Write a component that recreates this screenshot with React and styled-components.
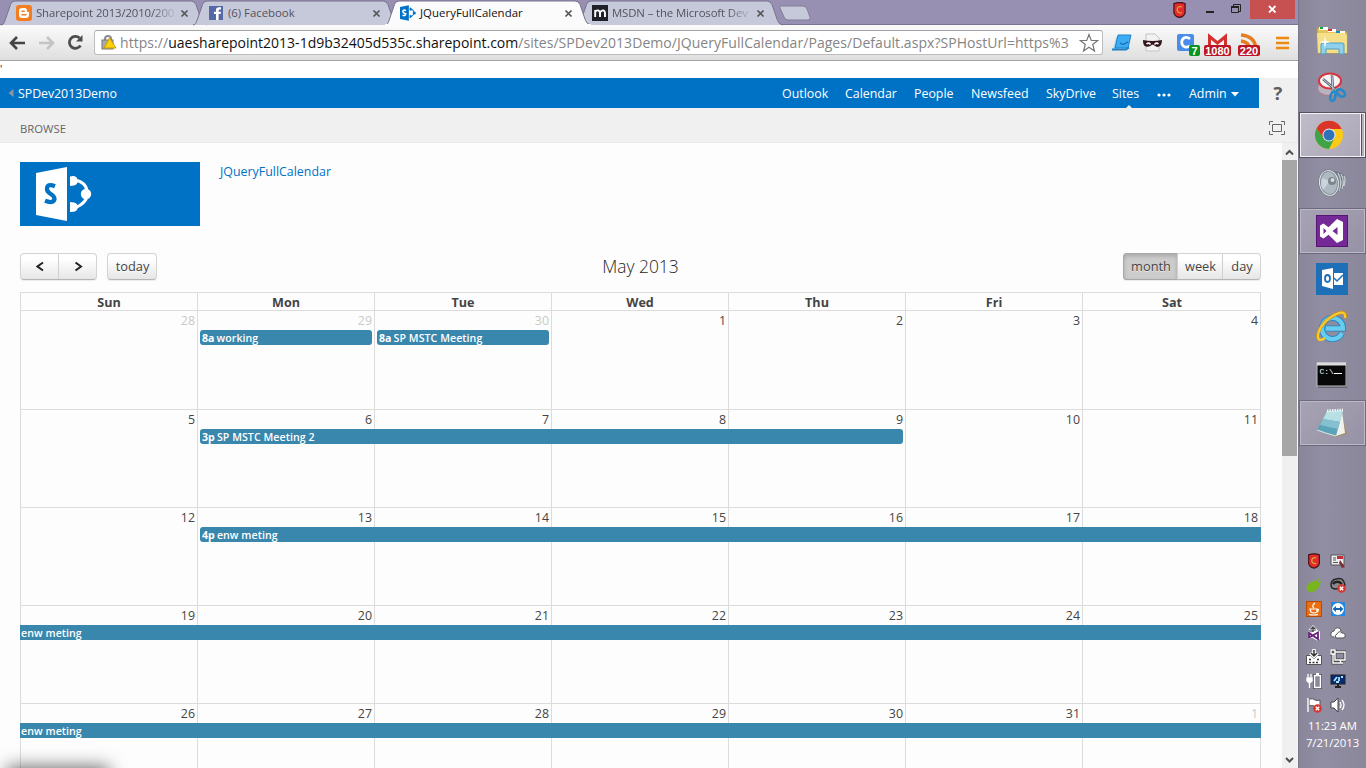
import React from "react";
import styled, { createGlobalStyle, css } from "styled-components";

const Global = createGlobalStyle`
  * { box-sizing: border-box; }
  body { margin: 0; overflow: hidden; background: #fff; }
  #root { height: 768px; }
`;

const Desktop = styled.div`
  display: flex;
  width: 1366px;
  height: 768px;
  overflow: hidden;
  font-family: "Open Sans", "Noto Sans", sans-serif;
  font-size: 12.4px;
  color: #444;
  white-space: nowrap;
`;

const Window = styled.main`
  position: relative;
  display: flex;
  flex-direction: column;
  width: 1298px;
  height: 768px;
  background: #fff;
`;

/* ---------- tab strip ---------- */
const TabStrip = styled.header`
  display: flex;
  height: 25px;
  background: #9890b3;
  border-bottom: 1px solid #7a7393;
`;

const TabBox = styled.div`
  position: relative;
  z-index: ${(p) => (p.$active ? 3 : 1)};
  display: flex;
  align-items: center;
  flex: none;
  width: 192px;
  height: 25px;
  padding: 1px 0 0 16px;
  font-size: 11.4px;
  color: ${(p) => (p.$active ? "#111" : "#54525f")};
`;

const TabShape = styled.svg`
  position: absolute;
  left: 0;
  top: 0;
  z-index: -1;
  overflow: visible;
`;

const TabTitle = styled.span`
  flex: none;
  width: 138px;
  margin-left: 4px;
  line-height: 18px;
  letter-spacing: ${(p) => (p.$active ? 0.04 : -0.02)}px;
  ${(p) => p.$fade && css`
    letter-spacing: -0.13px;
    mask-image: linear-gradient(90deg, #000 84%, rgba(0, 0, 0, 0.2) 99%);
  `}
`;

const TabClose = styled.svg`
  flex: none;
  margin-left: 6px;
`;

const NewTab = styled.svg`
  margin: 5px 0 0 10px;
`;

const WindowButtons = styled.div`
  display: flex;
  align-items: flex-start;
  margin-left: auto;
`;

const CloseButton = styled.div`
  display: flex;
  align-items: center;
  justify-content: center;
  width: 45px;
  height: 19px;
  margin: 0 3px 0 9px;
  background: #c75050;
`;

/* ---------- address bar ---------- */
const Toolbar = styled.div`
  display: flex;
  align-items: center;
  height: 36px;
  padding-left: 9px;
  background: linear-gradient(#fbfbfb, #dfdfdf);
  border-bottom: 1px solid #a3a3a3;
`;

const NavIcon = styled.svg`
  flex: none;
  margin-right: ${(p) => p.$gap}px;
`;

const Omnibox = styled.div`
  display: flex;
  align-items: center;
  flex: none;
  width: 1009px;
  height: 25px;
  padding: 0 3px 0 6px;
  background: #fff;
  border: 1px solid #bdbdbd;
  border-top-color: #a5a5a5;
  border-radius: 3px;
`;

const Url = styled.span`
  flex: none;
  width: 959px;
  margin-left: 3px;
  font-size: 14px;
  line-height: 22px;
  letter-spacing: 0.05px;
  color: #858585;
`;

const Host = styled.span`
  color: #111;
  letter-spacing: 0;
`;

const Extensions = styled.div`
  display: flex;
  align-items: center;
  padding-left: 9px;
`;

const ExtIcon = styled.svg`
  flex: none;
  margin-right: ${(p) => p.$gap}px;
`;

/* ---------- sharepoint chrome ---------- */
const Spacer = styled.div`
  height: 17px;
  font-size: 10px;
  line-height: 17px;
  color: #003;
`;

const SuiteRow = styled.div`
  display: flex;
  height: 30px;
  background: #f0f0f0;
`;

const SuiteBar = styled.nav`
  display: flex;
  align-items: center;
  justify-content: space-between;
  width: 1259px;
  padding-left: 8px;
  background: #0072c6;
  color: #fff;
`;

const SiteName = styled.span`
  display: flex;
  align-items: center;
  gap: 4px;
  letter-spacing: -0.06px;
`;

const SuiteLinks = styled.div`
  display: grid;
  grid-template-columns: 63px 69px 57px 75px 66px 45px 32px 70px;
  height: 30px;
  line-height: 30px;
`;

const SuiteLink = styled.span`
  position: relative;
  display: flex;
  align-items: center;
  gap: 4px;
  padding-top: 1px;
`;

const SelectedNotch = styled.svg`
  position: absolute;
  left: 13px;
  bottom: 0;
`;

const Help = styled.span`
  width: 38px;
  text-align: center;
  font-size: 18.5px;
  line-height: 30px;
  font-weight: 700;
  color: #5c5c5c;
`;

const Ribbon = styled.div`
  display: flex;
  align-items: center;
  justify-content: space-between;
  height: 35px;
  padding: 6px 13px 0 20px;
  background: #f0f0f0;
  border-bottom: 1px solid #e9e9e9;
  font-size: 11.3px;
  color: #666;
`;

const Viewport = styled.div`
  display: flex;
  flex: 1;
  min-height: 0;
`;

const Page = styled.section`
  width: 1282px;
  padding: 19px 0 0 20px;
  overflow: hidden;
  background: #fdfdfd;
`;

const Scrollbar = styled.aside`
  display: flex;
  flex-direction: column;
  align-items: center;
  justify-content: space-between;
  width: 16px;
  background: #f0f0f0;
  border-right: 1px solid #f7f7f7;
`;

const Thumb = styled.div`
  width: 15px;
  height: 296px;
  margin-bottom: auto;
  background: #a6a6a6;
`;

const PageTop = styled.div`
  display: flex;
  gap: 20px;
  height: 91px;
  color: #0072c6;
  line-height: 19px;
`;

/* ---------- calendar ---------- */
const CalHeader = styled.div`
  display: grid;
  grid-template-columns: 1fr auto 1fr;
  align-items: center;
  width: 1241px;
  height: 27px;
  margin-bottom: 12px;
  font-size: 12.8px;
  color: #444;
`;

const ButtonSet = styled.div`
  display: flex;
  gap: 10px;
  justify-content: ${(p) => (p.$end ? "flex-end" : "flex-start")};
`;

const ButtonGroup = styled.div`
  display: flex;
  height: 27px;
  background: linear-gradient(#fff 20%, #e6e6e6);
  border: 1px solid #d4d4d4;
  border-bottom-color: #b5b5b5;
  border-radius: 4px;
  box-shadow: 0 1px 1px rgba(0, 0, 0, 0.07);
`;

const CalButton = styled.span`
  display: flex;
  align-items: center;
  justify-content: center;
  width: ${(p) => p.$w}px;
  padding: 0 0 1px 1px;
  text-shadow: 0 1px 1px rgba(255, 255, 255, 0.75);
  &:not(:last-child) { border-right: 1px solid #d0d0d0; }
  ${(p) => p.$down && css`
    margin: -1px 0 -1px -1px;
    border: 1px solid #a8a8a8;
    border-radius: 4px 0 0 4px;
    background: #ccc;
    box-shadow: inset 0 2px 4px rgba(0, 0, 0, 0.18);
  `}
`;

const Month = styled.h1`
  margin: -2px 0 0;
  font-size: 17.4px;
  line-height: 26px;
  font-weight: 300;
  color: #262626;
  letter-spacing: -0.02px;
`;

const Columns = styled.div`
  display: grid;
  grid-template-columns: repeat(6, 177px) 179px;
  width: 1241px;
`;

const DayNames = styled(Columns)`
  height: 18px;
  border-top: 1px solid #dcdcdc;
  border-right: 1px solid #dcdcdc;
`;

const DayName = styled.div`
  border-left: 1px solid #dcdcdc;
  text-align: center;
  font-size: 12.6px;
  line-height: 19px;
  font-weight: 700;
  color: #444;
`;

const Week = styled(Columns)`
  grid-template-rows: ${(p) => p.$h}px;
  border-right: 1px solid #dcdcdc;
`;

const Day = styled.div`
  grid-row: 1;
  grid-column: ${(p) => p.$col};
  border-left: 1px solid #dcdcdc;
  border-top: 1px solid #dcdcdc;
  padding-right: ${(p) => (p.$col === 7 ? 3 : 2)}px;
  text-align: right;
  line-height: 20px;
  color: ${(p) => (p.$faded ? "#c9c9c9" : "#444")};
`;

const Event = styled.div`
  z-index: 1;
  grid-row: 1;
  grid-column: ${(p) => p.$from} / ${(p) => p.$to};
  height: 15px;
  margin: 20px ${(p) => (p.$openEnd ? 0 : 2)}px 0 ${(p) => (p.$openStart ? 0 : 3)}px;
  padding-left: ${(p) => (p.$openStart ? 1 : 2)}px;
  border-radius: ${(p) => {
    const l = p.$openStart ? 0 : 3;
    const r = p.$openEnd ? 0 : 3;
    return `${l}px ${r}px ${r}px ${l}px`;
  }};
  background: #3a87ad;
  color: #fff;
  font-size: 10.6px;
  line-height: 17px;
  font-weight: 600;
  letter-spacing: 0.06px;
`;

const EventTime = styled.b`
  margin-right: 2px;
  font-weight: 700;
`;

const StatusShadow = styled.div`
  position: absolute;
  left: 12px;
  top: 772px;
  width: 92px;
  height: 20px;
  box-shadow: 0 0 18px 5px rgba(0, 0, 0, 0.6);
`;

/* ---------- taskbar ---------- */
const Taskbar = styled.aside`
  display: flex;
  flex-direction: column;
  align-items: center;
  width: 68px;
  height: 768px;
  padding-top: 16px;
  background: linear-gradient(90deg, #8a869a, #918da2 35%, #8b879b);
  border-left: 1px solid #7c788b;
`;

const TaskItem = styled.div`
  display: flex;
  align-items: center;
  justify-content: center;
  width: 67px;
  height: 46px;
  margin-bottom: 2px;
  padding-right: 2px;
  border: 1px solid transparent;
  ${(p) => p.$open && css`
    background: linear-gradient(135deg, #a7a3b4, #9692a5);
    border-color: #6f6b7e;
    box-shadow: inset 0 0 0 1px #bcb9c6;
  `}
  ${(p) => p.$focused && css`
    padding-right: 7px;
    background: linear-gradient(135deg, #c0bcc9, #aaa6b6);
    border-color: #55515f;
    box-shadow: inset 0 0 0 1px #f2f1f5, inset -3px 0 #b3afbf, inset -4px 0 #55515f, inset -5px 0 #f2f1f5;
  `}
`;

const Tray = styled.div`
  display: grid;
  grid-template-columns: 24px 24px;
  grid-auto-rows: 24px;
  place-items: center;
  margin: auto 13px 0 0;
`;

const Clock = styled.div`
  height: 51px;
  color: #fff;
  text-align: center;
  font-size: 11.4px;
  line-height: 17px;
  letter-spacing: -0.08px;
`;

const ShareMark = () => (
  <svg width="16" height="16" viewBox="0 0 56 56">
    <g stroke="#0072c6" strokeWidth="3.500" fill="none">
      <path d="M36 12q12 3 14 15q-4 12-14 16" />
      <path d="M34 14l9 4M34 42l9-5" />
    </g>
    <path d="M34 9a5.500 5.500 0 0 1 4 10l-4 1zM34 35l4 1a5.500 5.500 0 0 1 0 9l-4 1z" fill="#0072c6" />
    <circle cx="50" cy="28" r="5.500" fill="#0072c6" />
    <path d="M0 7L31 1V55L0 49z" fill="#0072c6" />
    <path d="M21 19Q10 16 10 22T20 31Q20 39 9 36" stroke="#fff" strokeWidth="5.500" fill="none" />
  </svg>
);

/* The site logo: a door panel with three linked nodes. */
const DoorLogo = () => (
  <svg width="180" height="64">
    <rect width="180" height="64" fill="#0072c6" />
    <path d="M16 11L47 5V59L16 53z" fill="#fff" />
    <path d="M35 24.300Q27 21 27 27C27 32.500 34.500 31.500 34.500 37Q33.500 42 25 38.800" stroke="#0072c6" strokeWidth="4.300" fill="none" />
    <path d="M50 14.500q7-2 8 4.500-1 4-4 4.500l-4 .5zM50 40l4 .5q4 1 4 5-1 5-8 4.500z" fill="#fff" />
    <path d="M57 18.500Q65 20.500 67 28L85 32M57 45Q65 41 67 35" stroke="#fff" strokeWidth="0" fill="none" />
    <path d="M56 19Q63 20 65.500 25L68 30M56 45Q63 42 65.500 39L68 34" transform="translate(17 0) scale(1)" opacity="0" />
    <path d="M57 18.500Q65 20.500 67 28M57 45Q65 41 67 35" stroke="#fff" strokeWidth="3" fill="none" />
    <circle cx="66" cy="32" r="5.200" fill="#fff" />
  </svg>
);

const favicons = {
  blogger: (
    <svg width="16" height="16">
      <rect width="16" height="16" rx="3" fill="#f57d20" />
      <path d="M3 6q0-3 3-3h2.500Q11 3 11 6q0 1 1 1h1v3q0 3-3 3H6q-3 0-3-3z" fill="#fff" />
      <path d="M6 6.200h2.200M6 9.800h4" stroke="#f57d20" strokeWidth="1.500" strokeLinecap="round" />
    </svg>
  ),
  facebook: (
    <svg width="16" height="16">
      <rect x="1" y="1" width="14" height="14" fill="#5468a8" />
      <path d="M8 15V9H6V6.800h2V5q0-2.800 3-2.800h2v2.300h-1.200q-1.200 0-1.200 1v1.300H13L12.700 9h-2.100v6z" fill="#fff" />
    </svg>
  ),
  sharepoint: <ShareMark />,
  msdn: (
    <svg width="16" height="16">
      <rect width="16" height="16" fill="#20202b" />
      <path d="M3.200 12V5M3.200 7q1-2 3-1.500Q8 6 8 8v4M8 7.500q1.500-2.500 3.500-2Q13 6 13 8v4" stroke="#fff" strokeWidth="1.900" fill="none" />
    </svg>
  ),
};

const tabs = [
  { icon: "blogger", title: "Sharepoint 2013/2010/200", fade: true },
  { icon: "facebook", title: "(6) Facebook" },
  { icon: "sharepoint", title: "JQueryFullCalendar", active: true },
  { icon: "msdn", title: "MSDN – the Microsoft Dev", fade: true },
];

const Tab = ({ icon, title, fade, active }) => (
  <TabBox $active={active}>
    <TabShape width="208" height="25">
      <path
        d="M1 25C4 24.500 4 23 5 20.500L10.500 4.500Q11.500 1 15 1H191Q194.500 1 196 4.500L201.500 20.500Q203 24.500 207 25"
        fill={active ? "#fbfbfb" : "#c6c9d9"}
        stroke="#77718d"
      />
      {active && <path d="M1 25H207" stroke="#fbfbfb" strokeWidth="2" />}
    </TabShape>
    {favicons[icon]}
    <TabTitle $fade={fade} $active={active}>{title}</TabTitle>
    <TabClose width="9" height="9">
      <path d="M1.500 1.500l6 6M7.500 1.500l-6 6" stroke="#555" strokeWidth="1.700" />
    </TabClose>
  </TabBox>
);

const Shield = ({ w = 14, h = 18 }) => (
  <svg width={w} height={h} viewBox="0 0 14 18">
    <path d="M1 2Q7 0 13 2V12Q12 16 7 17Q2 16 1 12z" fill="#e52c2c" stroke="#421015" strokeWidth="1.300" />
    <path d="M9.500 5.500Q4.500 4.500 4.500 8.500T9.500 12" stroke="#d5a33b" strokeWidth="1.400" fill="none" />
  </svg>
);

const BadgeIcon = ({ w, bw, gap, color, text, children }) => (
  <ExtIcon width={w} height="26" $gap={gap}>
    <g transform="translate(0 4)">{children}</g>
    <rect x={w - bw} y="15" width={bw} height="11" rx="2" fill={color} />
    <text x={w - bw / 2} y="24.500" textAnchor="middle" fontSize="11" fontWeight="700" fontFamily="Liberation Sans, sans-serif" fill="#fff">{text}</text>
  </ExtIcon>
);

const ExtensionIcons = () => (
  <Extensions>
    <ExtIcon width="20" height="18" $gap={11}>
      <path d="M1 16L4 3H8L5 16z" fill="#a9d6f6" />
      <path d="M6 1H19L16 14H3z" fill="#3cabf2" stroke="#1b83c9" />
      <path d="M0 15.500h14l3-2" stroke="#1d7fc6" strokeWidth="1.800" fill="none" />
      <path d="M8 9l3 1.500 5-2.500" stroke="#0b5ca0" fill="none" />
    </ExtIcon>
    <ExtIcon width="19" height="20" $gap={15}>
      <path d="M3 1H12L16 5V18H3z" fill="#f2f2f2" stroke="#c4c4c4" />
      <path d="M0 7Q5 8 9.500 8Q14 8 19 7Q19 14 14 14L9.500 11.500Q6 14.500 3 13.500Q0 13 0 7z" fill="#35161c" />
      <path d="M3.500 11q2.500-2 4 .5M11.500 11.500q2-2.500 4-.5" stroke="#fff" strokeWidth="1.600" fill="none" />
    </ExtIcon>
    <BadgeIcon w={23} bw={11} gap={4} color="#0a9420" text="7">
      <rect x="0" y="0" width="17" height="17" rx="2" fill="#4a8ce9" />
      <path d="M13 5Q10 2.500 7 4Q4 6 5 10Q7 15 13 12" stroke="#fff" strokeWidth="2.800" fill="none" />
    </BadgeIcon>
    <BadgeIcon w={27} bw={27} gap={7} color="#bb1526" text="1080">
      <path d="M4 1H23V14H4z" fill="#f4f4f4" />
      <path d="M5.500 14V2.500L13.500 9L21.500 2.500V14" stroke="#d62f2f" strokeWidth="3" fill="none" />
    </BadgeIcon>
    <BadgeIcon w={22} bw={22} gap={16} color="#bb1526" text="220">
      <path d="M3 1Q17 2 18 15M3 7Q11 8 12 15" stroke="#e57c22" strokeWidth="3.500" fill="none" />
    </BadgeIcon>
    <ExtIcon width="14" height="14" $gap={0}>
      <path d="M0 2H13M0 7H13M0 12H13" stroke="#ee8a12" strokeWidth="2.600" />
    </ExtIcon>
  </Extensions>
);

const weeks = [
  { h: 99, days: [28, 29, 30, 1, 2, 3, 4], faded: [0, 1, 2], events: [
    { from: 2, to: 3, time: "8a", title: "working" },
    { from: 3, to: 4, time: "8a", title: "SP MSTC Meeting" },
  ] },
  { h: 98, days: [5, 6, 7, 8, 9, 10, 11], events: [{ from: 2, to: 6, time: "3p", title: "SP MSTC Meeting 2" }] },
  { h: 98, days: [12, 13, 14, 15, 16, 17, 18], events: [{ from: 2, to: 8, time: "4p", title: "enw meting", openEnd: true }] },
  { h: 98, days: [19, 20, 21, 22, 23, 24, 25], events: [{ from: 1, to: 8, title: "enw meting", openStart: true, openEnd: true }] },
  { h: 98, days: [26, 27, 28, 29, 30, 31, 1], faded: [6], events: [{ from: 1, to: 8, title: "enw meting", openStart: true, openEnd: true }] },
];

const Calendar = () => (
  <>
    <CalHeader>
      <ButtonSet>
        <ButtonGroup>
          <CalButton $w={38}><svg width="9" height="11"><path d="M7 1.500L1.500 5.500L7 9.500" stroke="#222" strokeWidth="2" fill="none" /></svg></CalButton>
          <CalButton $w={37}><svg width="9" height="11"><path d="M1.500 1.500L7 5.500L1.500 9.500" stroke="#222" strokeWidth="2" fill="none" /></svg></CalButton>
        </ButtonGroup>
        <ButtonGroup><CalButton $w={48}>today</CalButton></ButtonGroup>
      </ButtonSet>
      <Month>May 2013</Month>
      <ButtonSet $end>
        <ButtonGroup>
          <CalButton $w={55} $down>month</CalButton>
          <CalButton $w={45}>week</CalButton>
          <CalButton $w={37}>day</CalButton>
        </ButtonGroup>
      </ButtonSet>
    </CalHeader>
    <DayNames>
      {["Sun", "Mon", "Tue", "Wed", "Thu", "Fri", "Sat"].map((d) => <DayName key={d}>{d}</DayName>)}
    </DayNames>
    {weeks.map((w, i) => (
      <Week key={i} $h={w.h}>
        {w.days.map((d, c) => <Day key={c} $col={c + 1} $faded={w.faded?.includes(c)}>{d}</Day>)}
        {w.events.map((e) => (
          <Event key={e.from} $from={e.from} $to={e.to} $openStart={e.openStart} $openEnd={e.openEnd}>
            {e.time && <EventTime>{e.time}</EventTime>}{e.title}
          </Event>
        ))}
      </Week>
    ))}
  </>
);

const apps = [
  { key: "explorer", art: (
    <svg width="34" height="36" viewBox="0 -4 34 36">
      <path d="M2 3H12L14 5H21L22 7H32V28H3z" fill="#e4c65e" stroke="#b99b42" />
      <path d="M4 2h9v3H4zM13 4h8v3h-8zM21 6h9v3h-9z" fill="#fff" />
      <path d="M5 3h3" stroke="#18a838" strokeWidth="2" /><path d="M13 5h4" stroke="#d63229" strokeWidth="2" /><path d="M21 7h4" stroke="#168bd0" strokeWidth="2" />
      <path d="M2 8H29L32 10V28H3z" fill="#f5df88" />
      <path d="M6 29V20Q6 18 8 18H27Q29 18 29 20V29H24V24H11V29z" fill="#8fd0ec" stroke="#4d9fc5" />
      <path d="M10 11l1 5 5 1-5 1-1 5-1-5-5-1 5-1z" fill="#fff" />
    </svg>) },
  { key: "snip", art: (
    <svg width="34" height="34">
      <ellipse cx="14" cy="18" rx="11.500" ry="7.500" fill="#b9b2c0" stroke="#b77788" />
      <ellipse cx="15" cy="11" rx="11" ry="7.500" fill="#f5f5f7" stroke="#d8343c" strokeWidth="2" />
      <path d="M8 9L23 22M17 5L18 22" stroke="#5c6772" strokeWidth="2.600" />
      <path d="M8 9L23 22M17 5L18 22" stroke="#c4ccd3" strokeWidth="1" />
      <g fill="none" stroke="#238bca" strokeWidth="2.600"><ellipse cx="18" cy="26.500" rx="2.500" ry="4.500" transform="rotate(12 18 26)" /><ellipse cx="26" cy="23" rx="4.500" ry="3" transform="rotate(38 26 23)" /></g>
    </svg>) },
  { key: "chrome", focused: true, art: (
    <svg width="32" height="32" viewBox="-16 -16 32 32">
      <circle r="14" fill="#fcc917" />
      <path d="M-12.500-6.500A14 14 0 0 1 12.800-6L0-6L-5.500 3.500z" fill="#db3529" />
      <path d="M-12.500-6.500A14 14 0 0 0 0 14L5.500 3L0 6L-5.500 3z" fill="#3fa447" />
      <circle r="6.500" fill="#e9e9ee" /><circle r="5.500" fill="#2f72b8" />
    </svg>) },
  { key: "speaker", art: (
    <svg width="32" height="34">
      <path d="M14 4L25 7Q30 10 30 15T26 23L16 30z" fill="#6c737d" />
      <path d="M22 7q5 8 1 18M25 8q4 7 1 15M28 10q2 4 0 10" stroke="#c5ccd2" strokeWidth="1.400" fill="none" />
      <ellipse cx="13" cy="17" rx="10.500" ry="13.500" fill="#dde2e6" stroke="#7a828b" transform="rotate(-8 13 17)" />
      <ellipse cx="13" cy="17" rx="8.500" ry="11.500" fill="#aeb9c4" stroke="#87909a" transform="rotate(-8 13 17)" />
      <path d="M6 12L14 15L7 24Q4 19 6 12z" fill="#ccd4db" />
      <circle cx="16" cy="15" r="4" fill="#7c858e" /><circle cx="16.500" cy="14" r="2" fill="#d5dadd" />
    </svg>) },
  { key: "vs", open: true, art: (
    <svg width="32" height="32">
      <rect x=".5" y=".5" width="31" height="31" fill="#742996" stroke="#561575" />
      <path d="M21 4L27 7V25L21 28L12.500 19.800L7.500 23.500L4 21.500V10.500L7.500 8.500L12.500 12.200zM21.500 12L16.500 16L21.500 20zM7.500 13V19L10.500 16z" fill="#fff" fillRule="evenodd" />
    </svg>) },
  { key: "outlook", art: (
    <svg width="32" height="32">
      <rect width="32" height="32" fill="#1d70b8" />
      <path d="M6 7L17 5V26L6 23z" fill="#fff" />
      <ellipse cx="11.500" cy="15.500" rx="2.500" ry="3.500" fill="none" stroke="#1d70b8" strokeWidth="1.800" />
      <path d="M18 10h9v12h-9z" fill="#fff" /><path d="M18 15l3 3 6-6" stroke="#1d70b8" strokeWidth="1.500" fill="none" />
    </svg>) },
  { key: "ie", art: (
    <svg width="34" height="34">
      <path d="M27 23A10.500 10.500 0 1 1 28 18.500H11" fill="none" stroke="#1e86bf" strokeWidth="6" />
      <path d="M27 23A10.500 10.500 0 1 1 28 18.500H11" fill="none" stroke="#68cbf0" strokeWidth="4.300" />
      <path d="M5 30Q0 27 6 17Q14 6 24 3Q32 1 30 8" fill="none" stroke="#c9920f" strokeWidth="3.400" />
      <path d="M10 28Q6 31 4 29.500Q1 26 6 17Q14 6 24 3Q31 1 30 8" fill="none" stroke="#f8cb35" strokeWidth="2.200" />
    </svg>) },
  { key: "cmd", art: (
    <svg width="32" height="28">
      <rect x="2" y="2" width="29" height="25" fill="#65616e" />
      <rect x="1" y="2" width="29" height="23" fill="#080808" stroke="#bbb" />
      <path d="M1 3H30" stroke="#dcdcdc" strokeWidth="3" />
      <text x="3.500" y="13" fontSize="8" fontFamily="Liberation Mono, monospace" fill="#fff">C:\</text><path d="M18 12.500H26" stroke="#fff" />
    </svg>) },
  { key: "notepad", open: true, art: (
    <svg width="34" height="32">
      <path d="M26 5L32 27L20 30L13 25z" fill="#a48e64" />
      <path d="M27 4L30 26L21 29L14 26z" fill="#f2f2ed" />
      <path d="M12 4L28 3L21 29L2 23z" fill="#5ba3b8" />
      <path d="M12 4L28 3L25 15L8 12z" fill="#b8dfe4" />
      <path d="M8 12L25 15L23 22L5 18z" fill="#86bfcd" />
      <path d="M12 4L28 3" stroke="#e9f2ef" strokeWidth="3" strokeDasharray="1.500 1" />
      <path d="M2 23Q10 26 21 29" stroke="#d9e9e9" fill="none" />
    </svg>) },
];

const RedCross = () => (
  <g><circle cx="11.500" cy="11.500" r="4.300" fill="#d83430" /><path d="M9.800 9.800l3.400 3.400m0-3.400l-3.400 3.400" stroke="#fff" strokeWidth="1.400" /></g>
);

const trayArt = [
  <Shield key="s" w={14} h={16} />,
  <svg key="1" width="16" height="16"><path d="M1 2h13v10H1z" fill="#eee" stroke="#555" /><path d="M7 3h6v3H7z" fill="#c22d39" /><path d="M3 5h3M3 7h3M3 9.500h5" stroke="#555" /><path d="M10 7l5 7-3 1-3-5z" fill="#7b2f35" /></svg>,
  <svg key="2" width="16" height="16"><ellipse cx="7" cy="9.500" rx="7" ry="4.800" transform="rotate(-30 7 9.500)" fill="#79b51c" /><path d="M11 5q0-3 3-3M13 6l3-1" stroke="#79b51c" strokeWidth="1.500" fill="none" /></svg>,
  <svg key="3" width="16" height="16"><path d="M1 8Q1 3 6 2Q12 0 14 5Q16 9 13 11L6 12Q1 12 1 8z" fill="#8a8a8a" stroke="#272727" strokeWidth="1.500" /><path d="M3 7Q5 4 9 5L12 7" stroke="#222" strokeWidth="2.500" fill="none" /><RedCross /></svg>,
  <svg key="4" width="16" height="16"><rect x=".5" y=".5" width="15" height="15" fill="#e96d13" stroke="#b64a05" /><path d="M4 8h7v3q-3 2-6 0zM11 8q3 0 0 3M3 13.500q5 1 9 0M8 7Q5 5 9 2" stroke="#fff" strokeWidth="1.200" fill="none" /></svg>,
  <svg key="5" width="16" height="16"><rect x="1" y="1" width="14" height="14" fill="#2388e2" /><circle cx="8" cy="8" r="6" fill="#fff" /><path d="M2.500 8L6 5V7H10V5L13.500 8L10 11V9H6V11z" fill="#1768b1" /></svg>,
  <svg key="6" width="16" height="16"><path d="M2 6L5 7.500L11 5L14 6.500V14L11 15.500L6 12.500L2 14z" fill="#fff" /><path d="M7 0L11.500 5H2.500z" fill="#fff" /><path d="M3 8V12.500L12 7.500V14z" fill="none" stroke="#68217a" strokeWidth="1.800" /><path d="M7 7V2M4.500 4.500L7 2L9.500 4.500" stroke="#444" strokeWidth="1.300" fill="none" /></svg>,
  <svg key="7" width="16" height="16"><path d="M4 12Q0 12 1 8Q2 6 4 6Q5 2 9 3Q11 4 11 6" fill="#fff" stroke="#555" /><path d="M6 13Q4 10 7 9Q9 5 12 8Q16 8 15 12L13 13z" fill="#fff" stroke="#555" /></svg>,
  <svg key="8" width="16" height="16"><path d="M.5 6.500h4L8 10l3.500-3.500h4v9H.5z" fill="#fff" stroke="#555" /><path d="M8 0v7M4.500 4L8 7.500 11.500 4" stroke="#fff" strokeWidth="3.500" fill="none" /><path d="M8 1v6M5 4l3 3 3-3" stroke="#333" strokeWidth="1.500" fill="none" /><path d="M3 10.500h2M11 10.500h2M3 13.500h10" stroke="#333" strokeWidth="1.500" strokeDasharray="2 1.500" /></svg>,
  <svg key="9" width="16" height="16"><path d="M5 3h10v8H5zM8 14h5M10.500 11v3M1 1h4v4H1zM3 5v9h5" stroke="#444" strokeWidth="3" fill="none" /><path d="M5 3h10v8H5zM8 14h5M10.500 11v3M1 1h4v4H1zM3 5v9h5" stroke="#fff" strokeWidth="1.400" fill="none" /></svg>,
  <svg key="10" width="16" height="16"><path d="M8.500 2.500h6v12h-6z" fill="#8b879b" stroke="#444" strokeWidth="3" /><path d="M8.500 2.500h6v12h-6z" stroke="#fff" strokeWidth="1.500" fill="#8b879b" /><path d="M10 1h3" stroke="#fff" strokeWidth="2" /><path d="M1 5h5v3l-2 1.500H3L1 8zM2 1v3M5 1v3M3.500 9v6" fill="#fff" stroke="#fff" strokeWidth="1.300" /></svg>,
  <svg key="11" width="16" height="16"><rect x="1" y="2" width="14" height="9" fill="#062b72" stroke="#222" /><path d="M5 14h6M8 11v3" stroke="#222" strokeWidth="2" /><path d="M4 8l3-4M9 4v4M6 9h3M11 4h2" stroke="#a9e2ff" strokeWidth="1.800" fill="none" /></svg>,
  <svg key="12" width="16" height="16"><path d="M2 1v14M3 2q4-1 6 1 3 1 5 0v7q-6 1-6-1-2-1-5 0z" fill="#fff" stroke="#555" /><path d="M2 1v14" stroke="#fff" strokeWidth="1.500" /><RedCross /></svg>,
  <svg key="13" width="16" height="16"><path d="M1 5h3l4-4v14l-4-4H1z" fill="#fff" stroke="#444" /><path d="M10 5q2 3 0 6M12 3q4 5 0 10" stroke="#fff" strokeWidth="1.300" fill="none" /></svg>,
];

export default function App() {
  return (
    <Desktop>
      <Global />
      <Window>
        <TabStrip>
          {tabs.map((t) => <Tab key={t.icon} {...t} />)}
          <NewTab width="34" height="17">
            <path d="M2 1H25Q28 1 29 4L32 12Q33 15 30 15H10Q7 15 6 12L2 3Q1 1 2 1z" fill="#c6c9d9" stroke="#817b98" />
          </NewTab>
          <WindowButtons>
            <svg width="103" height="22">
              <g transform="translate(45 1)"><Shield w={13} h={18} /></g>
              <path d="M78 12h8" stroke="#222" strokeWidth="2" />
            </svg>
            <svg width="10" height="16">
              <path d="M2.500 6V4.500H9.500V11.500H8" stroke="#222" fill="none" /><path d="M.5 6.500h7v6h-7z" stroke="#222" fill="none" /><path d="M0 7h8" stroke="#222" strokeWidth="2" />
            </svg>
            <CloseButton><svg width="9" height="9"><path d="M1 1l6.500 6.500M7.500 1L1 7.500" stroke="#fff" strokeWidth="1.800" /></svg></CloseButton>
          </WindowButtons>
        </TabStrip>
        <Toolbar>
          <NavIcon width="17" height="16" $gap={12}><path d="M16 8H3M8 2L2 8L8 14" stroke="#444" strokeWidth="2.600" fill="none" /></NavIcon>
          <NavIcon width="17" height="16" $gap={12}><path d="M1 8H14M9 2L15 8L9 14" stroke="#c4c4c4" strokeWidth="2.600" fill="none" /></NavIcon>
          <NavIcon width="17" height="17" $gap={10}><path d="M13.500 11.500A6 6 0 1 1 12.500 4" stroke="#4c4c4c" strokeWidth="2.800" fill="none" /><path d="M15.500 1V7.500H9z" fill="#4c4c4c" /></NavIcon>
          <Omnibox>
            <svg width="16" height="17">
              <path d="M4 7V5Q4 2 7 2T10 5V7" stroke="#8b8b8b" strokeWidth="2" fill="none" /><rect x="1" y="6" width="11" height="9" fill="#aaa" stroke="#777" />
              <path d="M8.500 4L15 14H3z" fill="#fad10c" stroke="#cb9d00" strokeLinejoin="round" />
            </svg>
            <Url>https://<Host>uaesharepoint2013-1d9b32405d535c.sharepoint.com</Host>/sites/SPDev2013Demo/JQueryFullCalendar/Pages/Default.aspx?SPHostUrl=https%3</Url>
            <svg width="20" height="20"><path d="M10 1.500L12.300 7.500H18.700L13.700 11.500L15.500 18L10 14.300L4.500 18L6.300 11.500L1.300 7.500H7.700z" fill="#fff" stroke="#777" strokeWidth="1.200" /></svg>
          </Omnibox>
          <ExtensionIcons />
        </Toolbar>
        <Spacer>'</Spacer>
        <SuiteRow>
          <SuiteBar>
            <SiteName><svg width="6" height="8"><path d="M5.500 0V8L.5 4z" fill="#8b96a0" /></svg>SPDev2013Demo</SiteName>
            <SuiteLinks>
              {["Outlook", "Calendar", "People", "Newsfeed", "SkyDrive"].map((t) => <SuiteLink key={t}>{t}</SuiteLink>)}
              <SuiteLink>Sites<SelectedNotch width="8" height="4"><path d="M0 4L4 0L8 4z" fill="#f0f0f0" /></SelectedNotch></SuiteLink>
              <SuiteLink><svg width="15" height="6"><circle cx="2" cy="4" r="1.600" fill="#fff" /><circle cx="7" cy="4" r="1.600" fill="#fff" /><circle cx="12" cy="4" r="1.600" fill="#fff" /></svg></SuiteLink>
              <SuiteLink>Admin<svg width="8" height="5"><path d="M0 0H8L4 4.500z" fill="#fff" /></svg></SuiteLink>
            </SuiteLinks>
          </SuiteBar>
          <Help>?</Help>
        </SuiteRow>
        <Ribbon>
          BROWSE
          <svg width="16" height="14"><path d="M.5 4V.5H4M12 .5h3.500V4M15.500 10v3.500H12M4 13.500H.5V10M3.500 3.500h9v7h-9z" stroke="#666" fill="none" /></svg>
        </Ribbon>
        <Viewport>
          <Page>
            <PageTop><DoorLogo />JQueryFullCalendar</PageTop>
            <Calendar />
          </Page>
          <Scrollbar>
            <svg width="15" height="17"><path d="M4 11.500L7.500 8L11 11.500" stroke="#505050" strokeWidth="2" fill="none" /></svg>
            <Thumb />
            <svg width="15" height="17"><path d="M4 7L7.500 10.500L11 7" stroke="#505050" strokeWidth="2" fill="none" /></svg>
          </Scrollbar>
        </Viewport>
        <StatusShadow />
      </Window>
      <Taskbar>
        {apps.map((a) => <TaskItem key={a.key} $open={a.open} $focused={a.focused}>{a.art}</TaskItem>)}
        <Tray>{trayArt}</Tray>
        <Clock>11:23 AM<br />7/21/2013</Clock>
      </Taskbar>
    </Desktop>
  );
}
